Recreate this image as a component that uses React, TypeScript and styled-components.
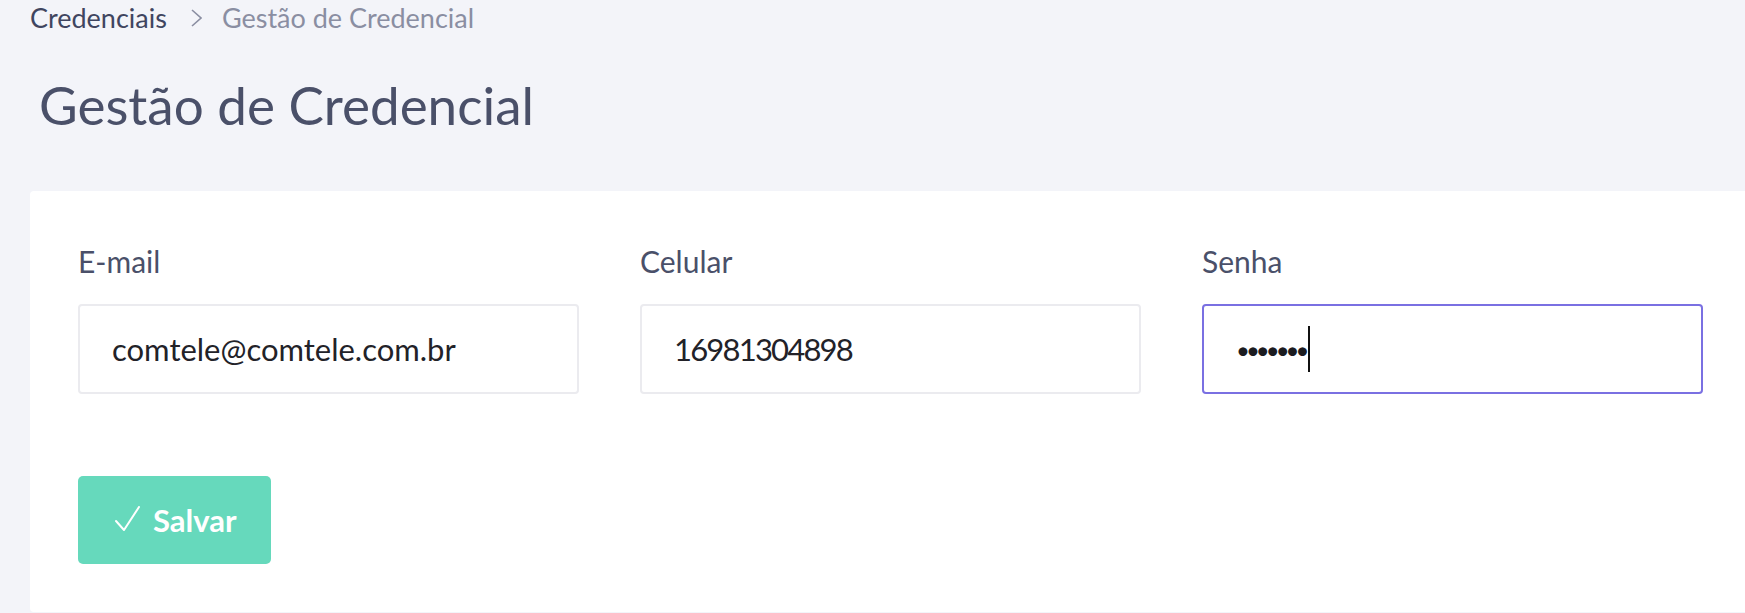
import React from 'react'
import styled, { createGlobalStyle } from 'styled-components'

const GlobalStyle = createGlobalStyle`
  html, body {
    margin: 0;
    padding: 0;
    background: #f3f4f9;
    font-family: Lato, "Open Sans", sans-serif;
    overflow: hidden;
  }
`

const Page = styled.div`
  width: 1745px;
  height: 613px;
  padding-left: 30px;
  box-sizing: border-box;
`

const Breadcrumb = styled.nav`
  display: flex;
  align-items: center;
  height: 32px;
  padding-top: 2px;
  font-size: 27px;
  line-height: 32px;
`

const Crumb = styled.span<{ current?: boolean }>`
  color: ${p => (p.current ? '#8a8ea2' : '#3f4560')};
`

const Chevron = styled.span`
  display: flex;
  margin: 0 20px 0 24px;
`

const Title = styled.h1`
  margin: 0;
  padding: 40px 0 0 9px;
  height: 157px;
  box-sizing: border-box;
  font-size: 53px;
  line-height: 62px;
  font-weight: 400;
  color: #4a5069;
`

const Card = styled.section`
  background: #ffffff;
  border-radius: 4px 0 0 4px;
  padding: 52px 0 49px 48px;
  height: 421px;
  box-sizing: border-box;
`

const FieldRow = styled.div`
  display: grid;
  grid-template-columns: repeat(3, 501px);
  column-gap: 61px;
`

const Field = styled.div`
  display: flex;
  flex-direction: column;
`

const Label = styled.label`
  font-size: 30px;
  line-height: 36px;
  color: #4a5069;
  margin-bottom: 25px;
`

const InputBox = styled.div<{ focused?: boolean }>`
  height: 90px;
  box-sizing: border-box;
  display: flex;
  align-items: center;
  padding: 0 32px;
  border-radius: 4px;
  border: 2px solid ${p => (p.focused ? '#7a70e2' : '#ebebef')};
  background: #fff;
  font-size: 31px;
  color: #222228;
`

const Value = styled.span<{ tight?: boolean }>`
  letter-spacing: ${p => (p.tight ? '-1.8px' : '0')};
`

const Dots = styled.span`
  font-size: 24px;
  letter-spacing: -4px;
  color: #1b1b1f;
`

const Caret = styled.span`
  display: inline-block;
  width: 2px;
  height: 46px;
  background: #111;
  margin-left: 3px;
`

const Actions = styled.div`
  margin-top: 82px;
`

const SaveButton = styled.button`
  display: flex;
  align-items: center;
  gap: 12px;
  width: 193px;
  height: 88px;
  padding: 0 0 0 37px;
  border: none;
  border-radius: 5px;
  background: #66d9bc;
  color: #fff;
  font-family: Lato, "Open Sans", sans-serif;
  font-size: 31px;
  font-weight: 700;
  cursor: pointer;
`

const CheckIcon = () => (
  <svg width="26" height="28" viewBox="0 0 26 28" fill="none">
    <polyline points="1,15 9,24 24,1" stroke="#fff" strokeWidth="2" strokeLinecap="round" strokeLinejoin="round" />
  </svg>
)

const ChevronIcon = () => (
  <svg width="11" height="18" viewBox="0 0 11 18" fill="none">
    <polyline points="1,1 10,9 1,17" stroke="#8a8ea2" strokeWidth="1.6" />
  </svg>
)

export default function App() {
  return (
    <>
      <GlobalStyle />
      <Page>
        <Breadcrumb>
          <Crumb>Credenciais</Crumb>
          <Chevron><ChevronIcon /></Chevron>
          <Crumb current>Gestão de Credencial</Crumb>
        </Breadcrumb>
        <Title>Gestão de Credencial</Title>
        <Card>
          <FieldRow>
            <Field>
              <Label>E-mail</Label>
              <InputBox><Value>comtele@comtele.com.br</Value></InputBox>
            </Field>
            <Field>
              <Label>Celular</Label>
              <InputBox><Value tight>16981304898</Value></InputBox>
            </Field>
            <Field>
              <Label>Senha</Label>
              <InputBox focused>
                <Dots>•••••••</Dots>
                <Caret />
              </InputBox>
            </Field>
          </FieldRow>
          <Actions>
            <SaveButton>
              <CheckIcon />
              Salvar
            </SaveButton>
          </Actions>
        </Card>
      </Page>
    </>
  )
}
